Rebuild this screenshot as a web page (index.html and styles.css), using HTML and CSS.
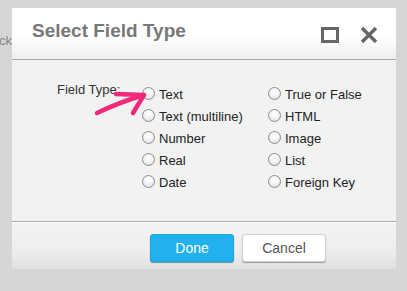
FILE: index.html
```html
<!DOCTYPE html>
<html lang="en">
<head>
    <meta charset="UTF-8">
    <meta name="viewport" content="width=device-width, initial-scale=1.0">
    <title>Select Field Type</title>
    <link rel="stylesheet" href="styles.css">
</head>
<body>
    <div class="page-behind">ck</div>
    <div class="dialog">
        <div class="dialog-header">
            <h2>Select Field Type</h2>
            <div class="header-icons">
                <span class="icon-max"></span>
                <svg class="icon-close" width="18" height="16" viewBox="0 0 18 16">
                    <path d="M2 1 L16 15 M16 1 L2 15" stroke="#666" stroke-width="3.4" fill="none"/>
                </svg>
            </div>
        </div>
        <div class="dialog-body">
            <div class="field-label">Field Type:</div>
            <div class="options">
                <label class="option"><span class="radio"></span>Text</label>
                <label class="option"><span class="radio"></span>True or False</label>
                <label class="option"><span class="radio"></span>Text (multiline)</label>
                <label class="option"><span class="radio"></span>HTML</label>
                <label class="option"><span class="radio"></span>Number</label>
                <label class="option"><span class="radio"></span>Image</label>
                <label class="option"><span class="radio"></span>Real</label>
                <label class="option"><span class="radio"></span>List</label>
                <label class="option"><span class="radio"></span>Date</label>
                <label class="option"><span class="radio"></span>Foreign Key</label>
            </div>
        </div>
        <div class="dialog-footer">
            <button class="btn btn-primary">Done</button>
            <button class="btn">Cancel</button>
        </div>
    </div>
    <svg class="arrow" width="407" height="291" viewBox="0 0 407 291">
        <path d="M97 113 Q 120 102 144 95" stroke="#f2297a" stroke-width="4.5" fill="none" stroke-linecap="round"/>
        <path d="M116 94 L144 95 L133 113" stroke="#f2297a" stroke-width="4.5" fill="none" stroke-linecap="round" stroke-linejoin="round"/>
    </svg>
</body>
</html>
```

FILE: styles.css
```css
body {
    margin: 0;
    background: #d6d6d6;
    font-family: "Liberation Sans", Arial, sans-serif;
    height: 291px;
    overflow: hidden;
    position: relative;
}
.page-behind {
    position: absolute;
    left: -1px;
    top: 33px;
    font-size: 13px;
    color: #888;
}
.dialog {
    position: relative;
    margin: 8px 0 0 12px;
    width: 384px;
    background: #f2f2f2;
}
.dialog-header {
    box-sizing: border-box;
    height: 52px;
    padding: 12px 18px 0 20px;
    display: flex;
    justify-content: space-between;
    background: linear-gradient(#ffffff 0%, #ffffff 55%, #eeeeee 100%);
    border-bottom: 1px solid #a8a8a8;
}
.dialog-header h2 {
    margin: 0;
    font-size: 19px;
    font-weight: bold;
    color: #787878;
}
.header-icons {
    display: flex;
    gap: 21px;
    padding-top: 7px;
}
.icon-max {
    box-sizing: border-box;
    width: 18px;
    height: 16px;
    border: 3px solid #666;
}
.dialog-body {
    box-sizing: border-box;
    height: 161px;
    padding: 23px 0 0 45px;
    display: flex;
    align-items: flex-start;
    font-size: 13px;
    color: #222;
}
.field-label {
    width: 86px;
    line-height: 22px;
    margin-top: -4px;
    color: #333;
}
.options {
    display: grid;
    grid-template-columns: 126px auto;
    grid-auto-rows: 22px;
}
.option {
    display: flex;
    align-items: center;
    height: 22px;
}
.radio {
    box-sizing: border-box;
    width: 13px;
    height: 13px;
    margin: -1px 4px 0 -1px;
    border-radius: 50%;
    border: 1px solid #8c8c8c;
    background: radial-gradient(circle at 50% 35%, #ffffff 0%, #f4f4f4 45%, #d4d4d4 100%);
}
.dialog-footer {
    box-sizing: border-box;
    height: 48px;
    padding: 12px 70px 0 0;
    display: flex;
    justify-content: flex-end;
    gap: 8px;
    border-top: 1px solid #a8a8a8;
    box-shadow: inset 0 1px 0 #ffffff;
    background: linear-gradient(#f3f3f3 0%, #eeeeee 60%, #e0e0e0 100%);
}
.btn {
    width: 84px;
    height: 28px;
    font-family: "Liberation Sans", Arial, sans-serif;
    font-size: 14px;
    color: #555;
    background: #ffffff;
    border: 1px solid #d0d0d0;
    border-radius: 3px;
    box-shadow: 0 1px 1px #9a9a9a;
}
.btn-primary {
    color: #ffffff;
    background: #21b1ef;
    border-color: #1ea6e0;
    box-shadow: 0 1px 1px #6a8fa0;
}
.arrow {
    position: absolute;
    left: 0;
    top: 0;
}
```
